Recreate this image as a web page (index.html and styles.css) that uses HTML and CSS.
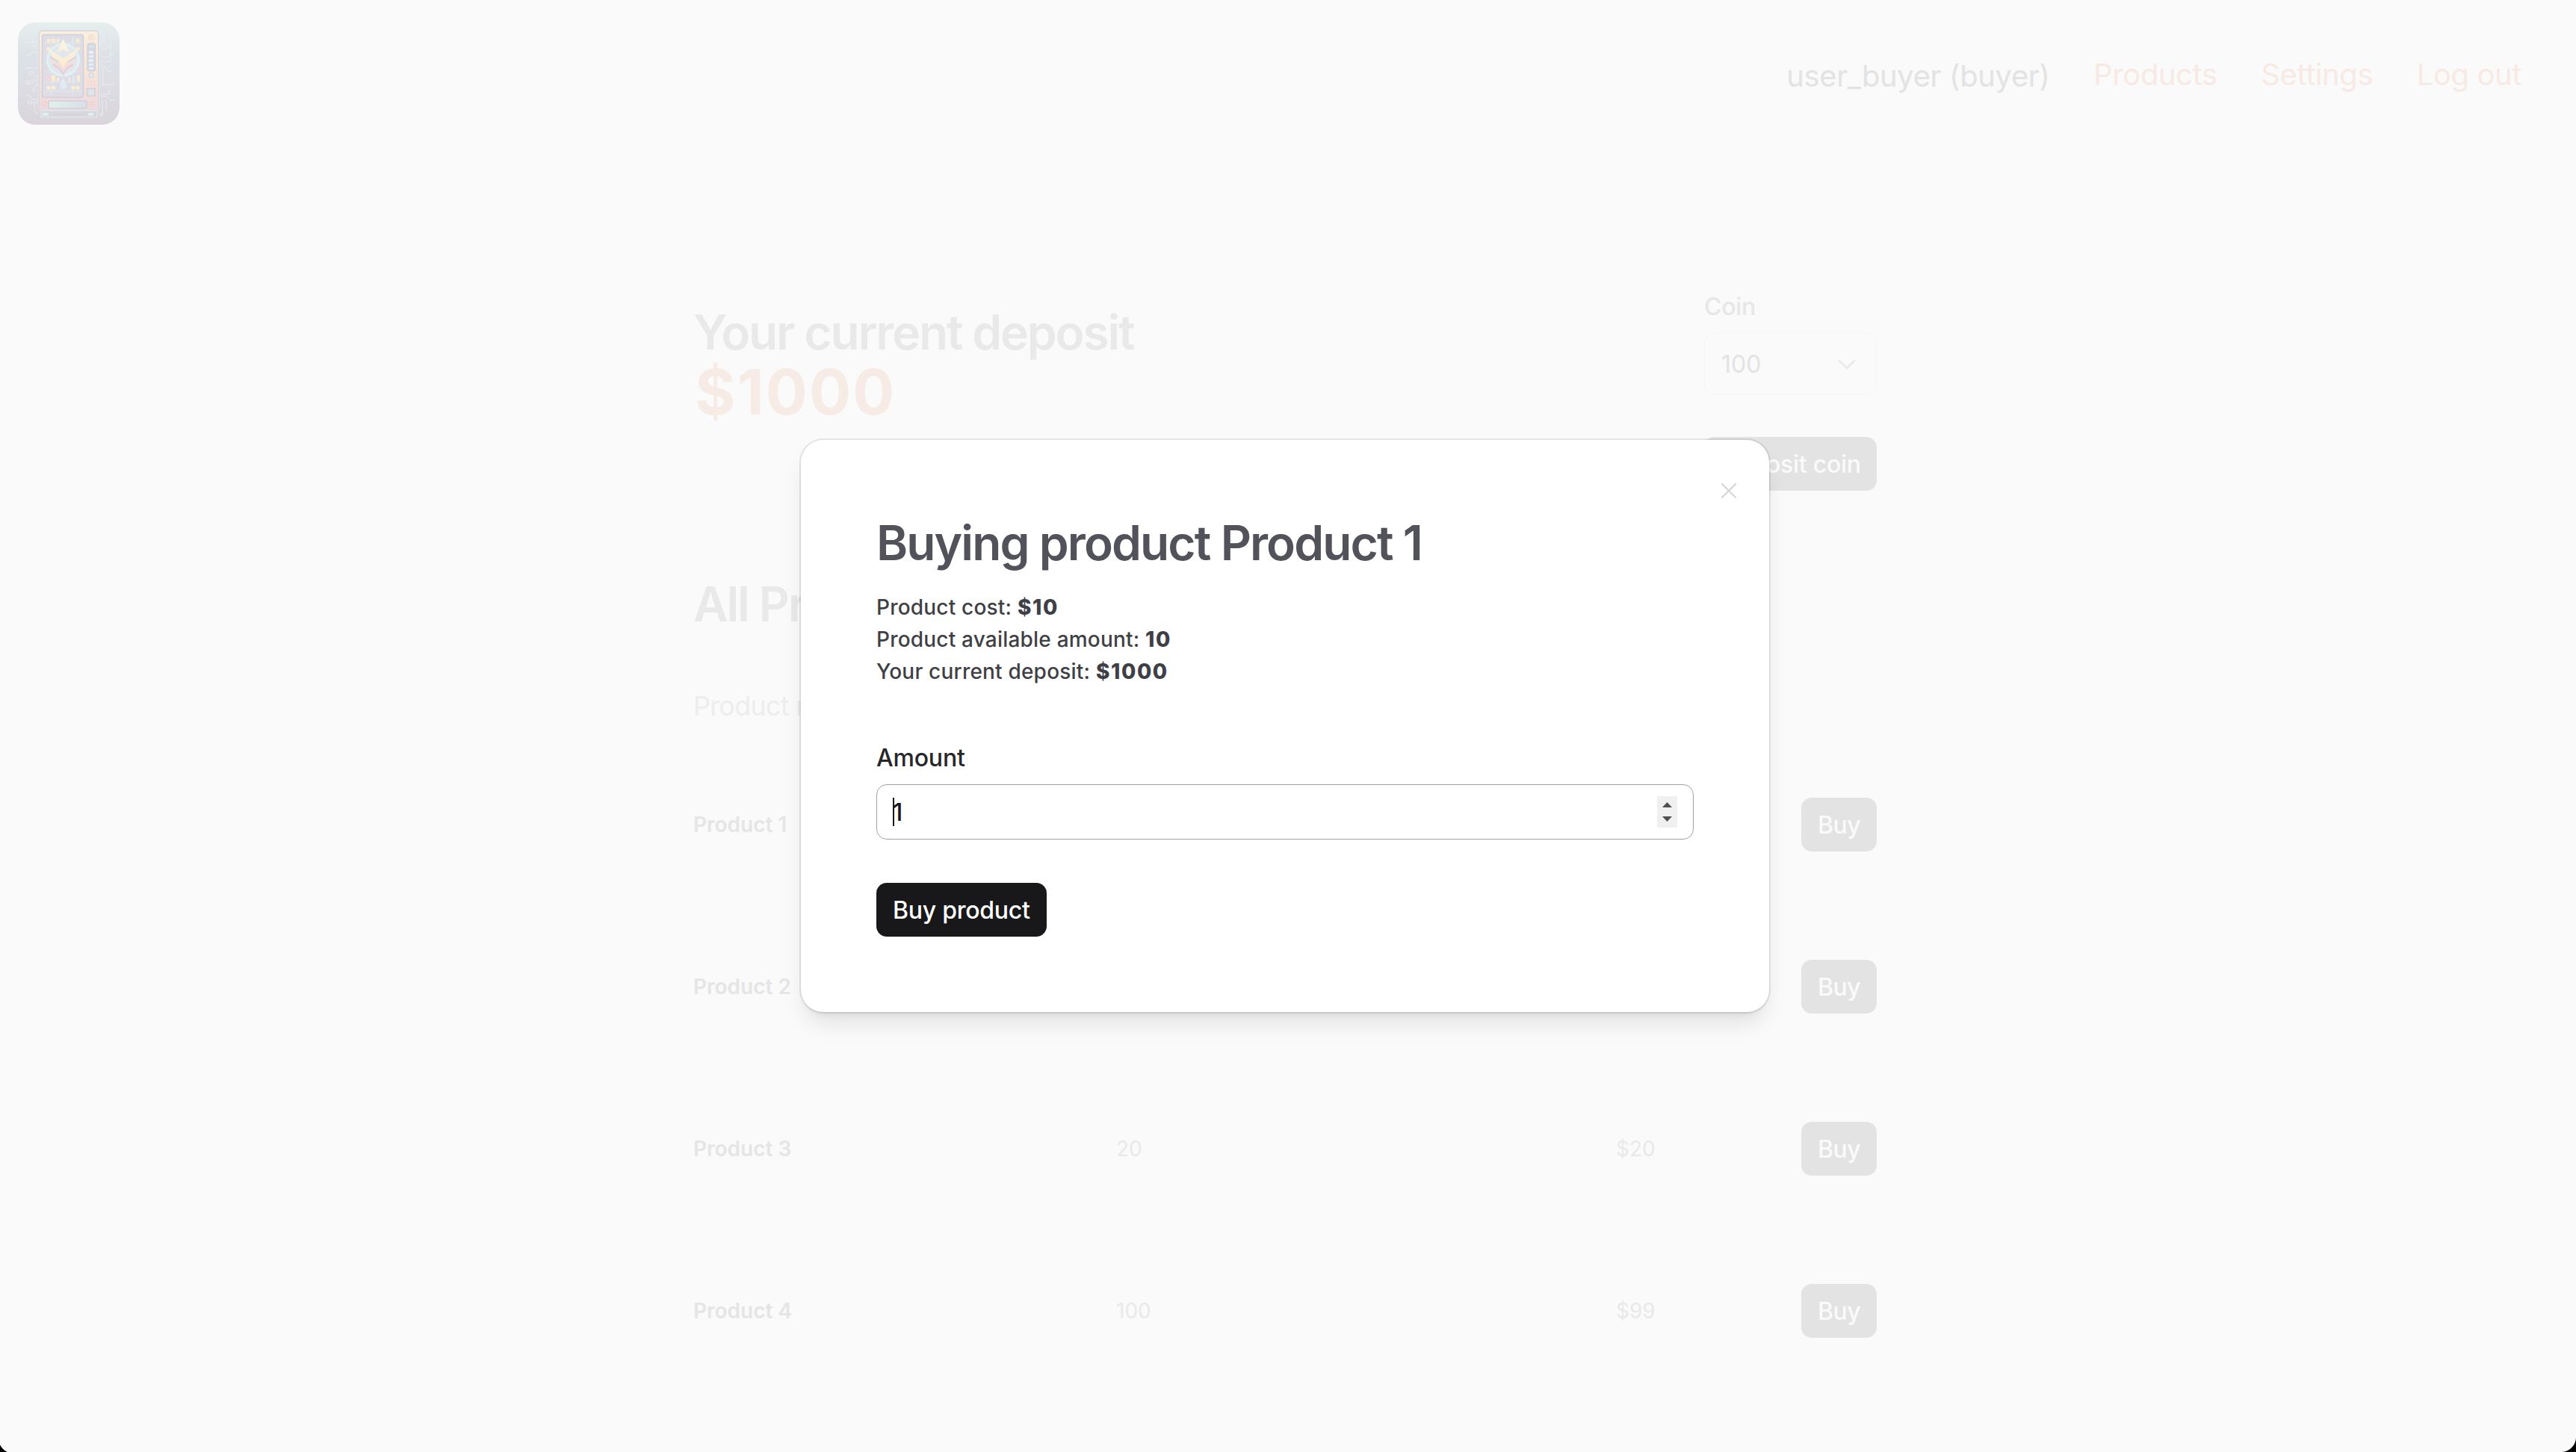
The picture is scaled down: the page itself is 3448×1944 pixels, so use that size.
FILE: index.html
```html
<!DOCTYPE html>
<html lang="en">
<head>
<meta charset="utf-8">
<title>Products</title>
<link rel="stylesheet" href="styles.css">
</head>
<body>
<header class="topbar">
  <svg class="logo" viewBox="0 0 136 137" aria-label="Vending machine">
    <defs>
      <linearGradient id="sky" x1="0" y1="0" x2="0" y2="1"><stop offset="0" stop-color="#e5efed"/><stop offset=".28" stop-color="#dde2e7"/><stop offset=".65" stop-color="#dcdce2"/><stop offset="1" stop-color="#d9d5da"/></linearGradient>
      <linearGradient id="shell" x1="0" y1="0" x2="0" y2="1"><stop offset="0" stop-color="#f9efdd"/><stop offset=".6" stop-color="#f6e2d9"/><stop offset="1" stop-color="#eed9dd"/></linearGradient>
      <linearGradient id="top" x1="0" y1="0" x2="0" y2="1"><stop offset="0" stop-color="#fcf6e4"/><stop offset="1" stop-color="#f9ebd2"/></linearGradient>
      <linearGradient id="low" x1="0" y1="0" x2="0" y2="1"><stop offset="0" stop-color="#f6dfd9"/><stop offset="1" stop-color="#eedae2"/></linearGradient>
      <linearGradient id="tray" x1="0" y1="0" x2="1" y2="0"><stop offset="0" stop-color="#e1f0ea"/><stop offset="1" stop-color="#d9dfe5"/></linearGradient>
    </defs>
    <rect width="136" height="137" rx="23" fill="url(#sky)"/>
    <g fill="none" stroke="#e9eef2" stroke-width="1">
      <path d="M10 27h16M19 21v6M10 44h5l4-4h8M10 61h16M10 79h8l6-7h3M10 82h8l6-5h3M10 98h6l4 5h7M21 89l3-6h3M17 107h10M22 107v8l4 9"/>
      <path d="M111 10v22M115 10v18M124 22v28M120 28v7h-8M111 47h8l4-4h5M111 52h14M111 58h4l5 7h6M114 82v-22M114 83h15M111 96h11v-6M111 99h7l6 5h6M118 104v14M113 104v20"/>
      <circle cx="19" cy="21" r="1.5"/><circle cx="22" cy="31" r="1.5"/><circle cx="18" cy="68" r="2.5"/><circle cx="21" cy="91" r="1.5"/><circle cx="16" cy="107" r="2.5"/><circle cx="114" cy="83" r="1.5"/><circle cx="111" cy="124" r="1.5"/>
    </g>
    <path d="M31 118h75v9H31z" fill="#d5d8de" stroke="#e6ecef"/>
    <path d="M33 121h8v4h-8zM94 121h7v4h-7z" fill="#e2eeea"/>
    <path d="M46 121h44v4H46z" fill="#d6d3da" stroke="#dfdde2" stroke-width=".6"/>
    <rect x="27" y="10" width="82" height="108" rx="6" fill="#d7d5df" stroke="#e6ecf0"/>
    <rect x="29" y="12" width="78" height="105" rx="4" fill="url(#shell)"/>
    <rect x="32.500" y="16.500" width="55" height="84" rx="3" fill="#dedde5" stroke="#d2cfdc" stroke-width="1.500"/>
    <path d="M36 28h48M36 40h48M36 53h48M36 66h48M36 80h48M36 92h48M45 19v79M74 19v79" stroke="#e6e8ed" stroke-width="1"/>
    <g fill="#f8edd3">
      <circle cx="41" cy="24.500" r="2.700"/><circle cx="48" cy="24.500" r="2.700"/><circle cx="80" cy="24.500" r="2.700"/><circle cx="41" cy="35.500" r="2.700"/><circle cx="80" cy="35.500" r="2.700"/>
      <circle cx="41" cy="87.500" r="2.700"/><circle cx="48" cy="87.500" r="2.700"/><circle cx="74" cy="87.500" r="2.700"/><circle cx="80" cy="87.500" r="2.700"/>
      <path d="M52 22h3v5h-3zM45 71h5v8h-5zM52 74h3v5h-3zM68 74h2v5h-2zM79 71h4v8h-4z"/>
    </g>
    <path d="M38 71h5v8h-5zM81 60h3v5h-3z" fill="#f2d8dc"/>
    <path d="M72 22h3v5h-3zM73 71h3v8h-3z" fill="#dceaf0"/>
    <circle cx="60.500" cy="50" r="21" fill="#e2e7ee" stroke="#e0f1f3" stroke-width="3"/>
    <path d="M60.500 22l8 18-8-4-8 4zM42 36l18.500 12L79 36l-5 13-13.500 7L47 49z" fill="url(#top)"/>
    <path d="M43 49l10 6 7.500-4 7.500 4 10-6-6 13-7 2-4.500 9-4.500-9-7-2z" fill="url(#low)"/>
    <path d="M56 53l4.500-3 4.500 3-4.500 8z" fill="#faedcf"/>
    <path d="M43 46l11 7M78 46l-11 7M47 56l8 5 5.500 8 5.500-8 8-5" fill="none" stroke="#d7cedb" stroke-width="1.500"/>
    <path d="M60.500 73c2 5 5 8 5 12a5 5 0 0 1-10 0c0-4 3-7 5-12z" fill="#e0ebf6" stroke="#d3dde9" stroke-width=".8"/>
    <circle cx="98.500" cy="20" r="4" fill="#f9eddf" stroke="#f0ddd0"/>
    <path d="M97 18h3M97 20h3M97 22h3M97 18v4" stroke="#e9d5cb" stroke-width=".7"/>
    <rect x="93" y="28" width="10.500" height="37" rx="2" fill="#d6d9e1" stroke="#cfcbd8"/>
    <path d="M95 31h7v3h-7z" fill="#d6e6e6"/><path d="M95 38h6v4h-6zM95 44h6v3h-6zM95 49h6v4h-6zM95 55h6v3h-6zM95 60h6v3h-6z" fill="#e3eff3"/>
    <circle cx="98" cy="71" r="3.200" fill="#deebf2" stroke="#d0d0dc"/>
    <path d="M93 79h11M93 83h11" stroke="#e5cdcb" stroke-width="1.500" stroke-dasharray="1.500 3"/>
    <rect x="92.500" y="88.500" width="10.500" height="10" fill="#dce6e8" stroke="#d2cdd9" stroke-width="1.500"/>
    <rect x="41" y="105" width="51" height="10" rx="2" fill="url(#tray)" stroke="#d0cfda" stroke-width="1.500"/>
    <path d="M95 107h8M95 110h8" stroke="#e8ccd2"/><circle cx="35" cy="109" r="3" fill="none" stroke="#ecd0d1"/>
  </svg>
  <nav class="nav">
    <span class="nav-user">user_buyer (buyer)</span>
    <a class="nav-link">Products</a>
    <a class="nav-link">Settings</a>
    <a class="nav-link">Log out</a>
  </nav>
</header>
<main class="content">
  <section class="deposit">
    <h1 class="title">Your current deposit<strong class="sum">$1000</strong></h1>
    <form class="coin-form">
      <label class="coin-label">Coin</label>
      <div class="select"><span>100</span><svg class="chevron" viewBox="0 0 24 14"><path d="M2 2l10 10L22 2"/></svg></div>
      <button class="btn faded" type="button">Deposit coin</button>
    </form>
  </section>
  <h2 class="title list-title">All Products</h2>
  <div class="grid head"><span>Product name</span></div>
  <div class="grid row"><b>Product 1</b><span>10</span><span>$10</span><button class="btn faded" type="button">Buy</button></div>
  <div class="grid row"><b>Product 2</b><span>15</span><span>$15</span><button class="btn faded" type="button">Buy</button></div>
  <div class="grid row"><b>Product 3</b><span>20</span><span>$20</span><button class="btn faded" type="button">Buy</button></div>
  <div class="grid row"><b>Product 4</b><span>100</span><span>$99</span><button class="btn faded" type="button">Buy</button></div>
</main>
<div class="modal" role="dialog">
  <svg class="close" viewBox="0 0 22 22"><path d="M2 2l18 18M20 2L2 20"/></svg>
  <h2 class="modal-title">Buying product Product 1</h2>
  <div class="facts">
    <p>Product cost: <strong>$10</strong></p>
    <p>Product available amount: <strong>10</strong></p>
    <p>Your current deposit: <strong>$1000</strong></p>
  </div>
  <label class="amount-label">Amount</label>
  <div class="field"><span class="value">1</span><i class="caret"></i>
    <svg class="spinner" viewBox="0 0 27 42"><path class="spin-bg" d="M0 0h27v42H0z"/><path class="spin-arrow" d="M7 15l6.500-7 6.500 7zM7 27h13l-6.500 7z"/></svg>
  </div>
  <button class="btn primary" type="button">Buy product</button>
</div>
<i class="corner left"></i><i class="corner right"></i>
</body>
</html>
```
FILE: styles.css
```css
* { box-sizing: border-box; }
body {
  margin: 0;
  width: 3448px;
  height: 1944px;
  overflow: hidden;
  position: relative;
  background: #fafafa;
  font-family: Inter, "Liberation Sans", sans-serif;
  font-size: 32px;
  color: #e3e3e3;
}
h1, h2, p { margin: 0; }
.topbar {
  display: flex;
  justify-content: space-between;
  height: 200px;
  padding: 30px 73px 0 24px;
}
.logo { width: 136px; height: 137px; }
.nav { display: flex; gap: 58.5px; font-size: 40px; line-height: 60px; letter-spacing: -.4px; padding-top: 40px; }
.nav-user { padding-top: 2px; }
.nav-link { color: #f7eae4; }
.content { width: 1584px; margin-left: 928px; }
.deposit { display: flex; justify-content: space-between; height: 560px; padding-top: 190px; }
.title { font-size: 64px; line-height: 80px; font-weight: 600; letter-spacing: -2.15px; color: #e9e9e9; }
.deposit .title { padding-top: 15px; }
.sum { display: block; padding-left: 2px; font-size: 83.2px; font-weight: 700; letter-spacing: 2.2px; color: #f6ebe5; }
.coin-form { width: 231px; display: flex; flex-direction: column; }
.coin-label { font-weight: 500; line-height: 42px; height: 56px; letter-spacing: -.3px; color: #e7e7e7; }
.select {
  height: 82px;
  margin-bottom: 57px;
  padding: 1px 27px 0 22px;
  display: flex;
  align-items: center;
  justify-content: space-between;
  border: 1px solid #f5f5f5;
  border-radius: 12px;
}
.chevron { width: 24px; height: 14px; fill: none; stroke: #ebebeb; stroke-width: 3; stroke-linecap: round; }
.btn {
  height: 72px;
  padding: 1px 22px 0;
  border: 0;
  border-radius: 14px;
  font: 500 32px/71px Inter, "Liberation Sans", sans-serif;
  letter-spacing: -.25px;
  white-space: nowrap;
}
.faded { background: #e3e3e3; color: #fafafa; }
.list-title { height: 156px; padding-top: 9px; }
.grid { display: grid; grid-template-columns: 566px 669px 1fr 101px; align-items: center; }
.grid .btn { letter-spacing: -.5px; }
.head { height: 58px; margin-bottom: 21px; font-size: 36px; letter-spacing: -.8px; color: #ededed; }
.row { height: 217px; font-size: 28px; color: #e9e9e9; }
.row b { font-weight: 600; color: #e5e5e5; }
.modal {
  position: absolute;
  left: 1072px;
  top: 589px;
  width: 1296px;
  height: 766px;
  padding: 100px 101px;
  background: #fff;
  border-radius: 30px;
  box-shadow: 0 0 0 2px rgba(0, 0, 0, .09), 0 20px 30px -6px rgba(0, 0, 0, .1), 0 8px 12px -8px rgba(0, 0, 0, .1);
}
.close {
  position: absolute;
  right: 43px;
  top: 57px;
  width: 22px;
  height: 22px;
  fill: none;
  stroke: #d4d4d4;
  stroke-width: 2;
  stroke-linecap: round;
}
.modal-title { font-size: 64px; line-height: 76px; font-weight: 600; letter-spacing: -1.9px; color: #52525b; }
.facts { padding-top: 27px; font-size: 28px; line-height: 43px; font-weight: 500; letter-spacing: .2px; color: #3f3f46; }
.facts strong { font-weight: 800; letter-spacing: 1.6px; }
.amount-label { display: block; padding-top: 70px; height: 129px; line-height: 48px; font-weight: 500; letter-spacing: -.2px; color: #27272a; }
.field {
  position: relative;
  display: flex;
  align-items: center;
  justify-content: space-between;
  height: 74px;
  padding: 0 21px;
  border: 1px solid #a1a1aa;
  border-radius: 14px;
  color: #18181b;
  font-weight: 500;
}
.caret { position: absolute; left: 21px; top: 17px; width: 2px; height: 38px; background: #18181b; }
.spinner { width: 27px; height: 42px; }
.spin-bg { fill: #f0f0f0; }
.spin-arrow { fill: #505050; }
.primary { margin-top: 58px; background: #18181b; color: #fff; }
.corner { position: absolute; bottom: 0; width: 20px; height: 20px; }
.left { left: 0; background: radial-gradient(circle at 100% 0, transparent 22px, #000 23px); }
.right { right: 0; background: radial-gradient(circle at 0 0, transparent 19.5px, #000 20.5px); }
```
